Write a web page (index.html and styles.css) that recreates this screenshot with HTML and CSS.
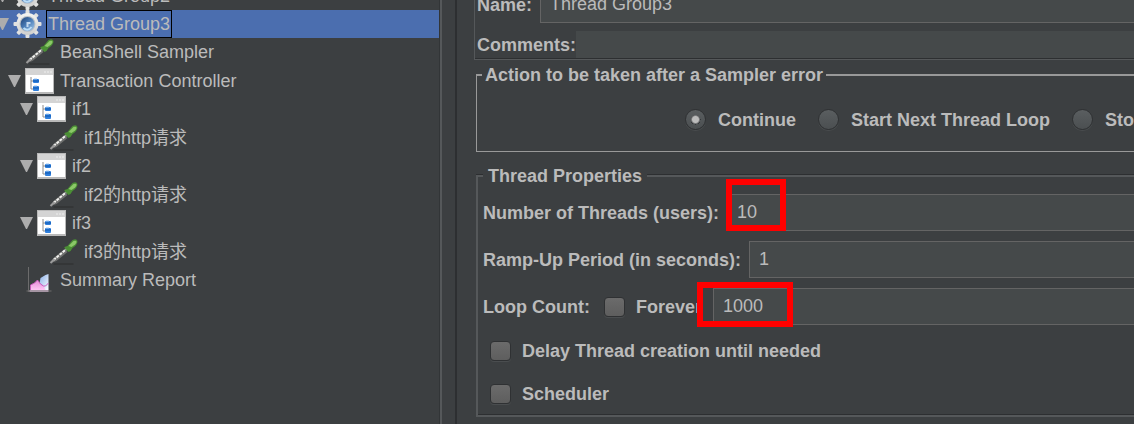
FILE: index.html
```html
<!DOCTYPE html>
<html lang="zh-CN">
<head>
    <meta charset="UTF-8">
    <meta name="viewport" content="width=device-width, initial-scale=1.0">
    <title>Thread Group3</title>
    <link rel="stylesheet" href="styles.css">
</head>
<body>
    <!-- Shared icons -->
    <svg class="icon-defs" aria-hidden="true">
        <defs>
            <linearGradient id="steel" x1="0" y1="0" x2="0" y2="1">
                <stop offset="0" stop-color="#f4f4f2"/>
                <stop offset="1" stop-color="#cfcfcd"/>
            </linearGradient>
            <linearGradient id="hub" x1="0" y1="0" x2="1" y2="1">
                <stop offset="0" stop-color="#1d3f74"/>
                <stop offset="0.5" stop-color="#4d7fb9"/>
                <stop offset="1" stop-color="#a4c8ea"/>
            </linearGradient>
            <linearGradient id="pink" x1="0" y1="0" x2="0" y2="1">
                <stop offset="0" stop-color="#e58ad6"/>
                <stop offset="1" stop-color="#ffc4f4"/>
            </linearGradient>
            <linearGradient id="sky" x1="0" y1="0" x2="1" y2="1">
                <stop offset="0" stop-color="#7fa9e6"/>
                <stop offset="1" stop-color="#ffffff"/>
            </linearGradient>
        </defs>
        <symbol id="gear" viewBox="0 0 28 28">
            <g fill="#e2e2e0">
                <rect x="12" y="0" width="4" height="28" rx="1"/>
                <rect x="12" y="0" width="4" height="28" rx="1" transform="rotate(45 14 14)"/>
                <rect x="12" y="0" width="4" height="28" rx="1" transform="rotate(90 14 14)"/>
                <rect x="12" y="0" width="4" height="28" rx="1" transform="rotate(135 14 14)"/>
            </g>
            <circle cx="14" cy="14" r="11" fill="url(#steel)"/>
            <circle cx="14" cy="14" r="8" fill="#b9bfc6"/>
            <circle cx="14" cy="14" r="7" fill="url(#hub)"/>
            <path d="M13 12h4v2h-2v3h-2z" fill="#c3d8ee"/>
            <path d="M10 18q4 4 8-1" fill="none" stroke="#b9dcf7" stroke-width="2"/>
        </symbol>
        <symbol id="dropper" viewBox="0 0 28 28">
            <path d="M4 26h20" stroke="#2c2e2f" stroke-width="1"/>
            <path d="M1 25l3-5L15 11l3 3L7 23z" fill="#6f706f"/>
            <path d="M4 22L17 11" stroke="#f1f1ee" stroke-width="2" stroke-dasharray="3 1"/>
            <path d="M1 25l4-4" stroke="#9a9a9a" stroke-width="2"/>
            <path d="M15 9l3-1 5-6q4-2 5 1 0 4-5 7l-2 3-2 1-4-4z" fill="#4b8f35"/>
            <path d="M19 8l5-5q3-1 3 1 0 2-5 5z" fill="#8bc868"/>
        </symbol>
        <symbol id="controller" viewBox="0 0 29 26">
            <rect x="0" y="0" width="29" height="26" fill="#b9b9b9"/>
            <rect x="1" y="1" width="27" height="6" fill="#d4d4d4"/>
            <rect x="1" y="7" width="27" height="17" fill="#ffffff"/>
            <path d="M19 4h2M22 4h2M25 4h2" stroke="#eeeeee" stroke-width="1"/>
            <path d="M6 9v12h3M6 13h3" fill="none" stroke="#8c8c8c" stroke-width="1"/>
            <rect x="8" y="11" width="6" height="4" rx="1" fill="#2f7fdc"/>
            <rect x="8" y="18" width="6" height="5" rx="1" fill="#2f7fdc"/>
            <path d="M8 13h6M8 20h6" stroke="#0d57ad" stroke-width="1"/>
            <path d="M9 11h3M9 18h3" stroke="#9cc6f4" stroke-width="1"/>
        </symbol>
        <symbol id="chart" viewBox="0 0 28 28">
            <path d="M3 1v25M1 25h25" stroke="#6c6c6c" stroke-width="1"/>
            <path d="M13 22l2-10 5-3 3-1v16H13z" fill="url(#sky)"/>
            <path d="M5 24v-5l4-2 3-3 3 4 3 2 2 4z" fill="url(#pink)"/>
            <path d="M5 24v-5l4-2 3-3 3 4 3 2 2 0 3-3" fill="none" stroke="#c659bb" stroke-width="1"/>
            <path d="M4 25h19" stroke="#f6d5f0" stroke-width="1"/>
        </symbol>
    </svg>

    <div class="app">
        <nav class="tree-pane">
            <ul class="tree">
                <li>
                    <div class="node">
                        <span class="arrow"></span>
                        <svg class="icon"><use href="#gear"/></svg>
                        <span class="node-label">Thread Group2</span>
                    </div>
                </li>
                <li>
                    <div class="node selected">
                        <span class="arrow"></span>
                        <svg class="icon"><use href="#gear"/></svg>
                        <span class="node-label">Thread Group3</span>
                    </div>
                    <ul>
                        <li>
                            <div class="node leaf">
                                <svg class="icon"><use href="#dropper"/></svg>
                                <span class="node-label">BeanShell Sampler</span>
                            </div>
                        </li>
                        <li>
                            <div class="node tall">
                                <span class="arrow"></span>
                                <svg class="icon"><use href="#controller"/></svg>
                                <span class="node-label">Transaction Controller</span>
                            </div>
                            <ul>
                                <li>
                                    <div class="node">
                                        <span class="arrow"></span>
                                        <svg class="icon"><use href="#controller"/></svg>
                                        <span class="node-label">if1</span>
                                    </div>
                                    <ul>
                                        <li>
                                            <div class="node leaf tall">
                                                <svg class="icon"><use href="#dropper"/></svg>
                                                <span class="node-label">if1的http请求</span>
                                            </div>
                                        </li>
                                    </ul>
                                </li>
                                <li>
                                    <div class="node">
                                        <span class="arrow"></span>
                                        <svg class="icon"><use href="#controller"/></svg>
                                        <span class="node-label">if2</span>
                                    </div>
                                    <ul>
                                        <li>
                                            <div class="node leaf tall">
                                                <svg class="icon"><use href="#dropper"/></svg>
                                                <span class="node-label">if2的http请求</span>
                                            </div>
                                        </li>
                                    </ul>
                                </li>
                                <li>
                                    <div class="node">
                                        <span class="arrow"></span>
                                        <svg class="icon"><use href="#controller"/></svg>
                                        <span class="node-label">if3</span>
                                    </div>
                                    <ul>
                                        <li>
                                            <div class="node leaf tall">
                                                <svg class="icon"><use href="#dropper"/></svg>
                                                <span class="node-label">if3的http请求</span>
                                            </div>
                                        </li>
                                    </ul>
                                </li>
                            </ul>
                        </li>
                        <li>
                            <div class="node leaf">
                                <svg class="icon"><use href="#chart"/></svg>
                                <span class="node-label">Summary Report</span>
                            </div>
                        </li>
                    </ul>
                </li>
            </ul>
        </nav>

        <div class="splitter"></div>

        <form class="settings">
            <div class="name-panel">
                <div class="row name-row">
                    <label for="name">Name:</label>
                    <input type="text" class="field" id="name" value="Thread Group3">
                </div>
                <div class="row comments-row">
                    <label for="comments">Comments:</label>
                    <input type="text" class="field plain" id="comments">
                </div>
            </div>

            <fieldset class="group error-action">
                <legend>Action to be taken after a Sampler error</legend>
                <div class="radios">
                    <label class="option"><input type="radio" name="onerror" checked>Continue</label>
                    <label class="option"><input type="radio" name="onerror">Start Next Thread Loop</label>
                    <label class="option"><input type="radio" name="onerror">Stop Thread</label>
                </div>
            </fieldset>

            <fieldset class="group thread-props">
                <legend>Thread Properties</legend>
                <div class="fields">
                    <div class="row">
                        <label for="threads">Number of Threads (users):</label>
                        <div class="field-wrap">
                            <input type="text" class="field" id="threads" value="10">
                            <span class="mark mark-threads"></span>
                        </div>
                    </div>
                    <div class="row">
                        <label for="rampup">Ramp-Up Period (in seconds):</label>
                        <input type="text" class="field" id="rampup" value="1">
                    </div>
                    <div class="row">
                        <label for="loops">Loop Count:</label>
                        <label class="option forever"><input type="checkbox">Forever</label>
                        <div class="field-wrap">
                            <input type="text" class="field" id="loops" value="1000">
                            <span class="mark mark-loops"></span>
                        </div>
                    </div>
                </div>
                <div class="checks">
                    <label class="option"><input type="checkbox">Delay Thread creation until needed</label>
                    <label class="option"><input type="checkbox">Scheduler</label>
                </div>
            </fieldset>
        </form>
    </div>
</body>
</html>
```

FILE: styles.css
```css
* {
    margin: 0;
    padding: 0;
    box-sizing: border-box;
}

body {
    background: #3c3f41;
    color: #bbbbbb;
    font-family: "Liberation Sans", "Noto Sans CJK SC", Arial, sans-serif;
    font-size: 18px;
    line-height: 20px;
    overflow: hidden;
}

.icon-defs {
    display: block;
    width: 0;
    height: 0;
}

.app {
    display: flex;
    height: 100vh;
    overflow: hidden;
}

/* Tree */
.tree-pane {
    flex: 0 0 439px;
    overflow: hidden;
}

.tree {
    margin: -18px 0 0 -4px;
}

.tree ul {
    margin-left: 12px;
}

.tree li {
    list-style: none;
}

.node {
    display: flex;
    align-items: center;
    height: 28px;
    white-space: nowrap;
}

.node.tall {
    height: 29px;
}

.node.leaf {
    padding-left: 17px;
}

.node.selected {
    background: #4b6eaf;
}

.arrow {
    width: 13px;
    margin-right: 4px;
    border: solid transparent;
    border-width: 12px 6px 0;
    border-top-color: #adadad;
}

.icon {
    width: 29px;
    height: 28px;
}

.node-label {
    margin-left: 3px;
    padding: 3px 2px;
    border: 1px solid transparent;
}

.selected .node-label {
    margin-left: 4px;
    padding: 3px 1px;
    border-color: #000000;
}

/* Divider between the tree and the settings */
.splitter {
    flex: 0 0 18px;
    border-left: 1px solid #323537;
    border-right: 2px solid #2d2f31;
    box-shadow: inset 2px 0 0 #55585a;
}

/* Settings */
.settings {
    flex: 1;
    min-width: 0;
    padding-left: 17px;
    font-weight: bold;
    overflow: hidden;
    white-space: nowrap;
}

.name-panel {
    margin-top: -14px;
    border-left: 1px solid #55585a;
    border-bottom: 1px solid #55585a;
    box-shadow: inset 0 -1px 0 #2d2f31;
    padding: 0 0 1px 2px;
}

.row {
    display: flex;
    align-items: center;
}

.name-row {
    gap: 8px;
    margin-bottom: 8px;
}

.field {
    flex: 1;
    min-width: 0;
    width: 100%;
    height: 37px;
    padding: 0 9px;
    border: 1px solid #646464;
    border-right: none;
    background: #45494a;
    color: #bbbbbb;
    font-family: inherit;
    font-size: 18px;
    outline: none;
}

.field.plain {
    height: 27px;
    border: none;
}

.field-wrap {
    display: flex;
    flex: 1;
    min-width: 0;
    position: relative;
}

.group {
    margin-left: 2px;
    min-width: 0;
    border: none;
}

.group legend {
    background: #3c3f41;
}

.error-action {
    margin-top: 5px;
    border: solid #999999;
    border-width: 2px 0 1px 1px;
}

.error-action legend {
    margin-left: 5px;
    padding: 0 3px;
}

.radios {
    display: flex;
    gap: 22px;
    padding: 24px 0 21px 208px;
}

.option {
    display: flex;
    flex-shrink: 0;
    align-items: center;
    gap: 11px;
}

.radios .option {
    gap: 12px;
}

.option input {
    appearance: none;
    width: 21px;
    height: 20px;
    border: 1px solid #2f3133;
    border-radius: 4px;
    background: linear-gradient(#6b6b6b, #5e5e5e);
    box-shadow: 0 1px 0 #4a4d4f;
}

.option input[type="radio"] {
    height: 21px;
    border-radius: 50%;
    background: linear-gradient(#5a5e60, #4b4f51);
}

.option input[type="radio"]:checked {
    background: radial-gradient(circle, #bbbbbb 3px, #34373a 5px, transparent 5px), linear-gradient(#5a5e60, #4b4f51);
}

.thread-props {
    margin-top: 14px;
    border: 2px solid #55585a;
    border-right: none;
    box-shadow: 0 -1px 0 #2d2f31, inset 0 -1px 0 #2d2f31;
}

.thread-props legend {
    margin-left: 5px;
    padding: 0 5px;
}

.fields {
    display: flex;
    flex-direction: column;
    gap: 10px;
    padding: 8px 0 16px 5px;
}

.fields .row {
    gap: 8px;
}

.forever {
    margin: 0 3px 0 6px;
}

.checks {
    display: flex;
    flex-direction: column;
    gap: 23px;
    padding: 0 0 11px 12px;
}

/* Red highlight frames over the edited values */
.mark {
    position: absolute;
    border: 6px solid #ff0000;
    pointer-events: none;
}

.mark-threads {
    top: -15px;
    left: -1px;
    width: 60px;
    height: 52px;
}

.mark-loops {
    top: -6px;
    left: -16px;
    width: 96px;
    height: 45px;
}
```
